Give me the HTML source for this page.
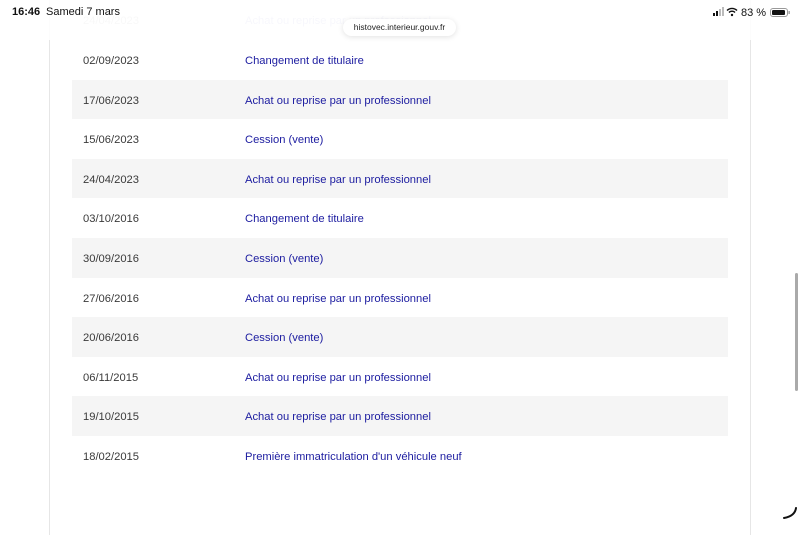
<!DOCTYPE html>
<html><head><meta charset="utf-8"><style>
*{margin:0;padding:0;box-sizing:border-box}
body{width:800px;height:525px;overflow:hidden;background:#fff;font-family:"Liberation Sans",sans-serif;position:relative}
.card{position:absolute;left:49px;top:-10px;width:702px;height:545px;border-left:1px solid #e6e6e6;border-right:1px solid #e6e6e6}
.row{position:absolute;left:72px;width:656px;height:39.6px;font-size:11.2px;line-height:43px}
.row.g{background:#f5f5f5}
.d{position:absolute;left:11px;color:#3a3a3a}
.e{position:absolute;left:173px;color:#1c1ca0}
.top{position:absolute;left:0;top:0;width:800px;height:40px;background:rgba(255,255,255,0.85)}
.sb{position:absolute;top:6px;font-size:11px;color:#111}
.pill{position:absolute;left:343px;top:19px;width:113px;height:17px;background:#fff;border-radius:9px;box-shadow:0 1px 6px rgba(0,0,0,0.12);font-size:8.5px;line-height:17px;text-align:center;color:#222}
.scroll{position:absolute;left:795px;top:273px;width:3px;height:118px;background:#aaa;border-radius:2px}
</style></head><body>
<div class="card"></div>
<div class="row" style="top:0.4px;opacity:0.25"><span class="d">24/04/2023</span><span class="e">Achat ou reprise par un professionnel</span></div>
<div class="top"></div>
<div class="row" style="top:40px"><span class="d">02/09/2023</span><span class="e">Changement de titulaire</span></div>
<div class="row g" style="top:79.6px"><span class="d">17/06/2023</span><span class="e">Achat ou reprise par un professionnel</span></div>
<div class="row" style="top:119.2px"><span class="d">15/06/2023</span><span class="e">Cession (vente)</span></div>
<div class="row g" style="top:158.8px"><span class="d">24/04/2023</span><span class="e">Achat ou reprise par un professionnel</span></div>
<div class="row" style="top:198.4px"><span class="d">03/10/2016</span><span class="e">Changement de titulaire</span></div>
<div class="row g" style="top:238px"><span class="d">30/09/2016</span><span class="e">Cession (vente)</span></div>
<div class="row" style="top:277.6px"><span class="d">27/06/2016</span><span class="e">Achat ou reprise par un professionnel</span></div>
<div class="row g" style="top:317.2px"><span class="d">20/06/2016</span><span class="e">Cession (vente)</span></div>
<div class="row" style="top:356.8px"><span class="d">06/11/2015</span><span class="e">Achat ou reprise par un professionnel</span></div>
<div class="row g" style="top:396.4px"><span class="d">19/10/2015</span><span class="e">Achat ou reprise par un professionnel</span></div>
<div class="row" style="top:436px"><span class="d">18/02/2015</span><span class="e">Première immatriculation d'un véhicule neuf</span></div>
<div class="sb" style="left:12px;font-weight:bold">16:46</div>
<div class="sb" style="left:46px">Samedi 7 mars</div>
<svg style="position:absolute;left:712px;top:7px" width="88" height="11">
<rect x="1" y="6" width="2" height="3" fill="#111"/><rect x="4" y="4" width="2" height="5" fill="#111"/><rect x="7" y="2" width="2" height="7" fill="#bbb"/><rect x="10" y="0" width="2" height="9" fill="#bbb"/>
<path d="M15 3.5a7 7 0 0 1 10 0M17 5.5a4 4 0 0 1 6 0" stroke="#111" stroke-width="1.4" fill="none"/><circle cx="20" cy="8" r="1.2" fill="#111"/>
<text x="29" y="9" font-size="11" font-family="Liberation Sans" fill="#111">83 %</text>
<rect x="58.5" y="1.5" width="17" height="8" rx="2.5" fill="none" stroke="#999"/><rect x="60" y="3" width="13" height="5" rx="1.3" fill="#111"/><rect x="76.5" y="4" width="1.3" height="3" fill="#999"/>
</svg>
<div class="pill">histovec.interieur.gouv.fr</div>
<div class="scroll"></div>
<svg style="position:absolute;left:780px;top:505px" width="20" height="20"><path d="M16 3 Q15 11 4 13" stroke="#111" stroke-width="2" fill="none" stroke-linecap="round"/></svg>
</body></html>
